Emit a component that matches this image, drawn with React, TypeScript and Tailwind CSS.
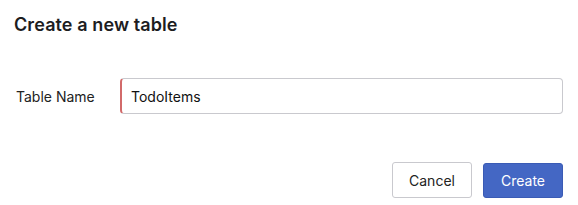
export default function App() {
  return (
    <div className="w-[578px] h-[205px] bg-white text-[#1d1d1f] font-['Inter',sans-serif] flex flex-col px-[14px]">
      <h1 className="pt-[14px] text-[18px] font-semibold leading-[22px] tracking-[0.1px]">Create a new table</h1>
      <div className="mt-[42px] flex items-center">
        <label className="w-[106px] pl-[2px] text-[14px] text-[#222]">Table Name</label>
        <div className="w-[443px] h-[36px] rounded-[4px] border border-[#c9c9ce] border-l-2 border-l-[#d26a6a] flex items-center pl-[9px] text-[14px] text-[#111]">
          TodoItems
        </div>
      </div>
      <div className="mt-[48px] flex justify-end gap-[11px] pr-[1px]">
        <button className="w-[80px] h-[36px] rounded-[3px] border border-[#c9c9ce] bg-white text-[14px] text-[#222]">Cancel</button>
        <button className="w-[80px] h-[35px] mt-[1px] rounded-[3px] bg-[#4467c4] border border-[#3a5bb5] text-[14px] text-white">Create</button>
      </div>
    </div>
  );
}
